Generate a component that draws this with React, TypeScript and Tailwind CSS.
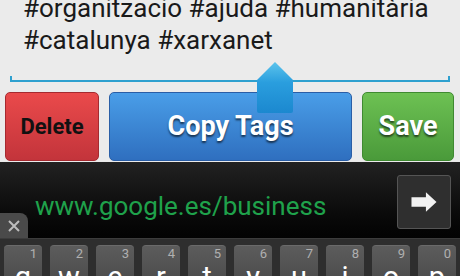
import React from "react";

const keys = [
  ["q", "1"], ["w", "2"], ["e", "3"], ["r", "4"], ["t", "5"],
  ["y", "6"], ["u", "7"], ["i", "8"], ["o", "9"], ["p", "0"],
];

export default function App() {
  return (
    <div className="relative w-[460px] h-[276px] overflow-hidden font-['Roboto',sans-serif] bg-[#ebebeb]">
      {/* Top editing area */}
      <div className="h-[162px] bg-[#ebebeb] flex flex-col">
        <div className="h-[64px] shrink-0 -mt-[8px] pl-[23px] text-[26px] leading-[32px] text-[#1a1a1a] whitespace-nowrap">
          <div className="h-[32px]">#organitzacio #ajuda #humanitària</div>
          <div className="h-[32px]">#catalunya #xarxanet</div>
        </div>
        <div className="shrink-0 mt-[20px] mx-[10px] h-[6px] border-x-2 border-b-2 border-[#2ea0cf]" />
        <div className="shrink-0 mt-[10px] flex gap-[10px] px-[5px] h-[69px]">
          <div className="w-[94px] rounded-[5px] border border-[#a52a30] bg-gradient-to-b from-[#ea4a4b] to-[#c3343b] flex items-center justify-center">
            <span className="text-[22px] font-bold text-[#111]">Delete</span>
          </div>
          <div className="w-[243px] rounded-[5px] border border-[#2a5ea6] bg-gradient-to-b from-[#4a9ee8] to-[#2f6fbf] flex items-center justify-center">
            <span className="text-[27px] font-bold text-white [text-shadow:0_2px_2px_rgba(0,0,0,0.6)]">Copy Tags</span>
          </div>
          <div className="w-[92px] rounded-[5px] border border-[#3f8a31] bg-gradient-to-b from-[#6dc153] to-[#4a9a3a] flex items-center justify-center">
            <span className="text-[27px] font-bold text-white [text-shadow:0_2px_2px_rgba(0,0,0,0.6)]">Save</span>
          </div>
        </div>
      </div>

      {/* Selection handle */}
      <svg className="absolute left-[257px] top-[62px]" width="36" height="51" viewBox="0 0 36 51">
        <defs>
          <linearGradient id="hg" x1="0" y1="0" x2="0" y2="1">
            <stop offset="0" stopColor="#5cc4ec" />
            <stop offset="0.4" stopColor="#2a9ede" />
            <stop offset="1" stopColor="#1b88cf" />
          </linearGradient>
        </defs>
        <path d="M18 0 L36 18 L36 49 Q36 51 34 51 L2 51 Q0 51 0 49 L0 18 Z" fill="url(#hg)" />
      </svg>

      {/* URL bar */}
      <div className="relative h-[76px] bg-gradient-to-b from-[#222] to-[#030303]">
        <div className="pl-[35px] pt-[29px] text-[26px] leading-[30px] text-[#1fa24b]">www.google.es/business</div>
        <div className="absolute left-[397px] top-[13px] w-[54px] h-[54px] rounded-[3px] border border-[#555] bg-[#2f2f2f] flex items-center justify-center">
          <svg width="54" height="54" viewBox="0 0 54 54">
            <path d="M14 22 L29 22 L29 17 L40 27 L29 37 L29 32 L14 32 Z" fill="#f2f2f2" />
          </svg>
        </div>
        <div className="absolute left-0 bottom-0 w-[28px] h-[25px] rounded-tr-[8px] bg-[#4a4a4a] flex items-center justify-center">
          <svg width="12" height="12" viewBox="0 0 12 12">
            <path d="M1 1 L11 11 M11 1 L1 11" stroke="#bdbdbd" strokeWidth="2" />
          </svg>
        </div>
      </div>

      {/* Keyboard */}
      <div className="h-[38px] bg-[#2e2e2e] border-t border-[#3c3c3c] flex gap-[8px] pl-[4px] pt-[6px]">
        {keys.map(([l, n]) => (
          <div key={l} className="relative w-[38px] h-[40px] shrink-0 rounded-t-[4px] bg-gradient-to-b from-[#5c5c5c] to-[#4a4a4a] border-t border-[#6a6a6a] overflow-hidden">
            <span className="absolute right-[5px] top-[1px] text-[13px] leading-[13px] text-[#b0b0b0]">{n}</span>
            <span className="absolute left-0 right-0 top-[17px] text-center text-[29px] leading-[29px] text-white">{l}</span>
          </div>
        ))}
      </div>
    </div>
  );
}
